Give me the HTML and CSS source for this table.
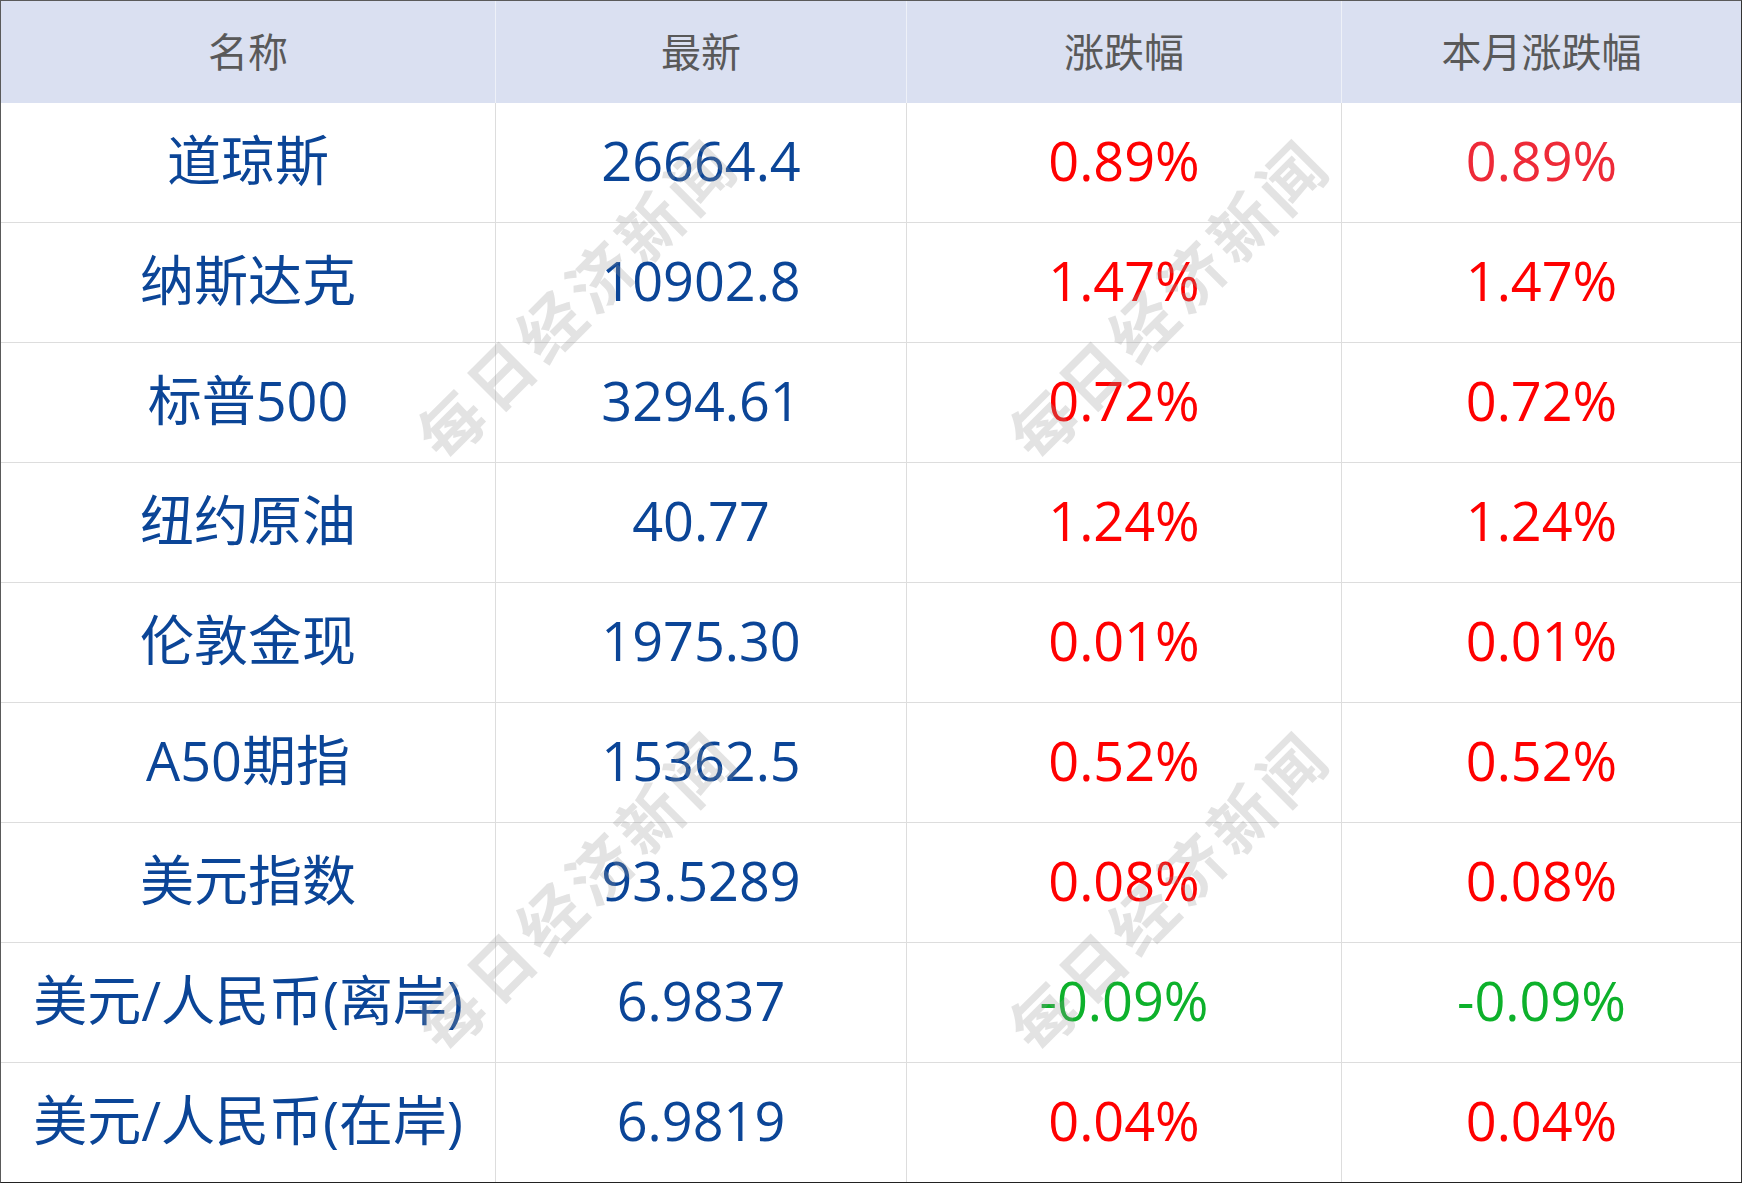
FILE: index.html
```html
<!DOCTYPE html>
<html lang="zh-CN">
<head>
<meta charset="utf-8">
<title>行情</title>
<link rel="stylesheet" href="styles.css">
</head>
<body>
<div class="board">
  <div class="grid">
    <div class="cell head">名称</div>
    <div class="cell head">最新</div>
    <div class="cell head">涨跌幅</div>
    <div class="cell head last">本月涨跌幅</div>

    <div class="cell name">道琼斯</div>
    <div class="cell val">26664.4</div>
    <div class="cell up">0.89%</div>
    <div class="cell up soft last">0.89%</div>

    <div class="cell name">纳斯达克</div>
    <div class="cell val">10902.8</div>
    <div class="cell up">1.47%</div>
    <div class="cell up last">1.47%</div>

    <div class="cell name">标普500</div>
    <div class="cell val">3294.61</div>
    <div class="cell up">0.72%</div>
    <div class="cell up last">0.72%</div>

    <div class="cell name">纽约原油</div>
    <div class="cell val">40.77</div>
    <div class="cell up">1.24%</div>
    <div class="cell up last">1.24%</div>

    <div class="cell name">伦敦金现</div>
    <div class="cell val">1975.30</div>
    <div class="cell up">0.01%</div>
    <div class="cell up last">0.01%</div>

    <div class="cell name">A50期指</div>
    <div class="cell val">15362.5</div>
    <div class="cell up">0.52%</div>
    <div class="cell up last">0.52%</div>

    <div class="cell name">美元指数</div>
    <div class="cell val">93.5289</div>
    <div class="cell up">0.08%</div>
    <div class="cell up last">0.08%</div>

    <div class="cell name">美元/人民币(离岸)</div>
    <div class="cell val">6.9837</div>
    <div class="cell down">-0.09%</div>
    <div class="cell down last">-0.09%</div>

    <div class="cell name bottom">美元/人民币(在岸)</div>
    <div class="cell val bottom">6.9819</div>
    <div class="cell up bottom">0.04%</div>
    <div class="cell up bottom last">0.04%</div>
  </div>

  <div class="mark mark-tl">每日经济新闻</div>
  <div class="mark mark-tr">每日经济新闻</div>
  <div class="mark mark-bl">每日经济新闻</div>
  <div class="mark mark-br">每日经济新闻</div>
</div>
</body>
</html>
```

FILE: styles.css
```css
html, body {
  margin: 0;
  padding: 0;
  background: #ffffff;
}

.board {
  position: relative;
  width: 1740px;
  height: 1181px;
  border-top: 1px solid #5a5a5a;
  border-left: 1px solid #5a5a5a;
  border-right: 1px solid #333333;
  border-bottom: 1px solid #222222;
  overflow: hidden;
  font-family: "Open Sans", "Noto Sans CJK SC", sans-serif;
}

.grid {
  display: grid;
  grid-template-columns: 495px 411px 435px 399px;
  grid-template-rows: 102px repeat(8, 120px) 119px;
}

.cell {
  box-sizing: border-box;
  display: flex;
  align-items: center;
  justify-content: center;
  padding-bottom: 5px;
  border-right: 1px solid #dddddd;
  border-bottom: 1px solid #dddddd;
  font-size: 54px;
  white-space: nowrap;
  line-height: 1;
}

.cell.last {
  border-right: none;
}

.cell.bottom {
  border-bottom: none;
}

.head {
  background: #dae0f1;
  color: #595959;
  font-size: 40px;
  border-bottom: none;
  border-right: 1px solid #eef1f8;
  font-family: "Noto Sans CJK SC", sans-serif;
}

.name, .val {
  color: #0b4597;
}

.up {
  color: #ff0000;
}

.up.soft {
  color: #ee2a38;
}

.down {
  color: #0db12b;
}

.mark {
  position: absolute;
  width: 520px;
  height: 76px;
  margin-left: -260px;
  margin-top: -38px;
  display: flex;
  align-items: center;
  justify-content: center;
  font-family: "Noto Sans CJK SC", sans-serif;
  font-weight: 700;
  font-size: 64px;
  letter-spacing: 6px;
  color: rgba(150, 150, 150, 0.27);
  transform: rotate(-45deg);
  pointer-events: none;
  white-space: nowrap;
}

.mark-tl { left: 574px; top: 296px; }
.mark-tr { left: 1166px; top: 296px; }
.mark-bl { left: 574px; top: 888px; }
.mark-br { left: 1166px; top: 888px; }
```
